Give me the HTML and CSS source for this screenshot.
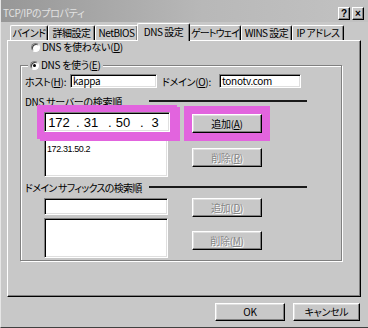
FILE: index.html
```html
<!DOCTYPE html>
<html lang="ja">
<head>
    <meta charset="UTF-8">
    <meta name="viewport" content="width=device-width, initial-scale=1.0">
    <title>TCP/IPのプロパティ</title>
    <link rel="stylesheet" href="styles.css">
</head>
<body>
    <div class="dialog">
        <div class="titlebar">
            <span class="title">TCP/IPのプロパティ</span>
            <span class="cap-btn">?</span>
            <span class="cap-btn">×</span>
        </div>

        <div class="tabs">
            <div class="tab tab-bind">バインド</div>
            <div class="tab tab-adv">詳細設定</div>
            <div class="tab tab-netbios">NetBIOS</div>
            <div class="tab tab-dns active">DNS 設定</div>
            <div class="tab tab-gw">ゲートウェイ</div>
            <div class="tab tab-wins">WINS 設定</div>
            <div class="tab tab-ip">IP アドレス</div>
        </div>

        <div class="panel">
            <div class="radio-row first">
                <span class="radio"></span>DNS を使わない(<u>D</u>)
            </div>

            <fieldset class="group">
                <legend class="radio-row"><span class="radio on"></span>DNS を使う(<u>E</u>)</legend>

                <div class="host-row">
                    <span class="lbl-host">ホスト(<u>H</u>):</span>
                    <div class="field w-host">kappa</div>
                    <span class="lbl-domain">ドメイン(<u>O</u>):</span>
                    <div class="field w-domain">tonotv.com</div>
                </div>

                <!-- DNS servers -->
                <div class="heading"><span>DNS サーバーの検索順</span><span class="rule"></span></div>
                <div class="block">
                    <div class="col-left">
                        <div class="field ipbox mark">
                            <span class="octet">172</span><span class="dot">.</span>
                            <span class="octet">31</span><span class="dot">.</span>
                            <span class="octet">50</span><span class="dot">.</span>
                            <span class="octet">3</span>
                        </div>
                        <div class="field listbox list-dns"><span class="item">172.31.50.2</span></div>
                    </div>
                    <div class="col-right">
                        <div class="btn btn-add mark-btn">追加(<u>A</u>)</div>
                        <div class="btn btn-del disabled">削除(<u>R</u>)</div>
                    </div>
                </div>

                <!-- domain suffixes -->
                <div class="heading heading-suffix"><span>ドメイン サフィックスの検索順</span><span class="rule"></span></div>
                <div class="block">
                    <div class="col-left">
                        <div class="field suffix-input"></div>
                        <div class="field listbox list-suffix"></div>
                    </div>
                    <div class="col-right">
                        <div class="btn btn-add2 disabled">追加(<u>D</u>)</div>
                        <div class="btn btn-del2 disabled">削除(<u>M</u>)</div>
                    </div>
                </div>
            </fieldset>
        </div>

        <div class="footer">
            <div class="btn btn-ok">OK</div>
            <div class="btn btn-cancel">キャンセル</div>
        </div>
    </div>
</body>
</html>
```

FILE: styles.css
```css
body {
    margin: 0;
    font-family: "Noto Sans CJK JP", sans-serif;
    font-size: 10px;
    font-feature-settings: "palt";
    letter-spacing: -0.3px;
    color: #000;
    background-color: #c8c8c8;
}

.dialog {
    width: 368px;
    height: 328px;
    box-sizing: border-box;
    background-color: #c8c8c8;
    border-left: 1px solid #e6e6e6;
    border-bottom: 1px solid #404040;
}

/* title bar (inactive) */
.titlebar {
    height: 22px;
    box-sizing: border-box;
    padding: 2px 4px 0 2px;
    display: flex;
    align-items: center;
    background: linear-gradient(90deg, #979797, #b8b8b8 55%, #c2c2c2);
    color: #e2e2e2;
}

.title {
    flex: 1;
}

.cap-btn {
    width: 12px;
    height: 13px;
    margin: 3px 0 0 2px;
    box-sizing: border-box;
    background-color: #c8c8c8;
    border: 1px solid;
    border-color: #fff #000 #000 #fff;
    box-shadow: inset -1px -1px #808080;
    font-family: "Liberation Sans", sans-serif;
    font-weight: bold;
    font-size: 10px;
    line-height: 11px;
    letter-spacing: 0;
    text-align: center;
    color: #000;
}

/* tabs */
.tabs {
    height: 18px;
    display: flex;
    align-items: flex-end;
    padding-left: 9px;
}

.tab {
    height: 15px;
    box-sizing: border-box;
    border: 1px solid;
    border-color: #fff #000 transparent #fff;
    border-bottom: none;
    border-radius: 2px 2px 0 0;
    box-shadow: inset -1px 0 #808080;
    text-align: center;
    line-height: 14px;
    letter-spacing: -0.5px;
    white-space: nowrap;
}

.tab.active {
    height: 18px;
    margin: 0 -1px -1px;
    position: relative;
    z-index: 1;
    background-color: #c8c8c8;
    line-height: 15px;
}

.tab-bind { width: 38px; }
.tab-adv { width: 47px; }
.tab-netbios { width: 43px; }
.tab-dns { width: 53px; }
.tab-gw { width: 52px; letter-spacing: -0.9px; }
.tab-wins { width: 51px; }
.tab-ip { width: 52px; }

/* page */
.panel {
    width: 354px;
    height: 257px;
    margin-left: 6px;
    box-sizing: border-box;
    border: 1px solid;
    border-color: #fff #000 #000 #fff;
    box-shadow: inset -1px -1px #808080;
}

.radio-row {
    display: flex;
    align-items: center;
    height: 12px;
    line-height: 12px;
    white-space: nowrap;
}

.radio-row.first {
    margin-left: 23px;
}

.radio {
    width: 9px;
    height: 9px;
    margin-right: 2px;
    box-sizing: border-box;
    position: relative;
    border-radius: 50%;
    background-color: #fff;
    border: 1px solid;
    border-color: #808080 #fff #fff #808080;
    box-shadow: inset 1px 1px #404040;
}

.radio.on::after {
    content: "";
    position: absolute;
    left: 2px;
    top: 2px;
    width: 3px;
    height: 3px;
    border-radius: 50%;
    background-color: #000;
}

.group {
    width: 322px;
    min-width: 0;
    margin: 6px 0 0 12px;
    padding: 0 0 2px 4px;
    box-sizing: border-box;
    border: 1px solid #808080;
    box-shadow: 1px 1px 0 #fff, inset 1px 1px 0 #fff;
}

.group legend {
    padding: 0 2px;
    margin-left: 3px;
    background-color: #c8c8c8;
}

.host-row {
    display: flex;
    align-items: center;
    height: 14px;
    margin-top: 3px;
    white-space: nowrap;
}

.lbl-host { width: 45px; }

.lbl-domain {
    width: 57px;
    margin-left: 5px;
}

.field {
    box-sizing: border-box;
    background-color: #fff;
    border: 1px solid;
    border-color: #808080 #fff #fff #808080;
    box-shadow: inset 1px 1px #000, inset -1px -1px #dfdfdf;
}

.w-host,
.w-domain {
    height: 14px;
    padding-left: 2px;
    line-height: 12px;
}

.w-host { width: 87px; }
.w-domain { width: 82px; }

.heading {
    display: flex;
    align-items: center;
    width: 282px;
    height: 12px;
    margin-top: 7px;
    white-space: nowrap;
}

.heading-suffix {
    margin-top: 4px;
    letter-spacing: -0.7px;
}

.rule {
    flex-shrink: 0;
    width: 158px;
    height: 2px;
    margin-left: auto;
    background-color: #1a1a1a;
}

.block {
    display: flex;
    margin-top: 5px;
}

.col-left {
    width: 126px;
    margin-left: 19px;
}

.col-right {
    margin-left: 22px;
    display: flex;
    flex-direction: column;
}

/* IP address control, with the pink marker round it */
.ipbox {
    height: 20px;
    padding-left: 3px;
    display: flex;
    align-items: center;
    font-family: "Liberation Sans", sans-serif;
    font-size: 13px;
    letter-spacing: 0;
}

.mark {
    position: relative;
    z-index: 1;
    box-shadow: inset 1px 1px #000, inset -1px -1px #dfdfdf,
        0 0 0 7px #e264de, 3px 2px 0 7px #e264de;
}

.octet {
    width: 22px;
    text-align: center;
}

.dot {
    width: 10px;
    padding-left: 6px;
    box-sizing: border-box;
}

.listbox {
    width: 124px;
    height: 40px;
}

.list-dns {
    margin-top: 5px;
    padding: 2px 0 0 2px;
}

.item {
    font-family: "Liberation Sans", sans-serif;
    font-size: 9px;
    letter-spacing: -0.4px;
    line-height: 10px;
}

.suffix-input {
    width: 124px;
    height: 17px;
}

.list-suffix {
    margin-top: 3px;
}

/* push buttons */
.btn {
    width: 70px;
    height: 19px;
    box-sizing: border-box;
    background-color: #c8c8c8;
    border: 1px solid;
    border-color: #fff #000 #000 #fff;
    box-shadow: inset -1px -1px #808080, inset 1px 1px #dfdfdf;
    text-align: center;
    line-height: 17px;
}

.btn.disabled {
    color: #868686;
    text-shadow: 1px 1px #fff;
}

.btn-add { margin-top: 2px; }
.btn-del { margin-top: 15px; }
.btn-del2 { margin-top: 14px; }

.mark-btn {
    position: relative;
    z-index: 1;
    box-shadow: inset -1px -1px #808080, inset 1px 1px #dfdfdf, 0 0 0 8px #e264de;
}

.footer {
    display: flex;
    justify-content: flex-end;
    gap: 8px;
    margin-top: 6px;
    padding-right: 8px;
}

.footer .btn {
    height: 18px;
    line-height: 16px;
}

.btn-cancel {
    width: 67px;
}
```
